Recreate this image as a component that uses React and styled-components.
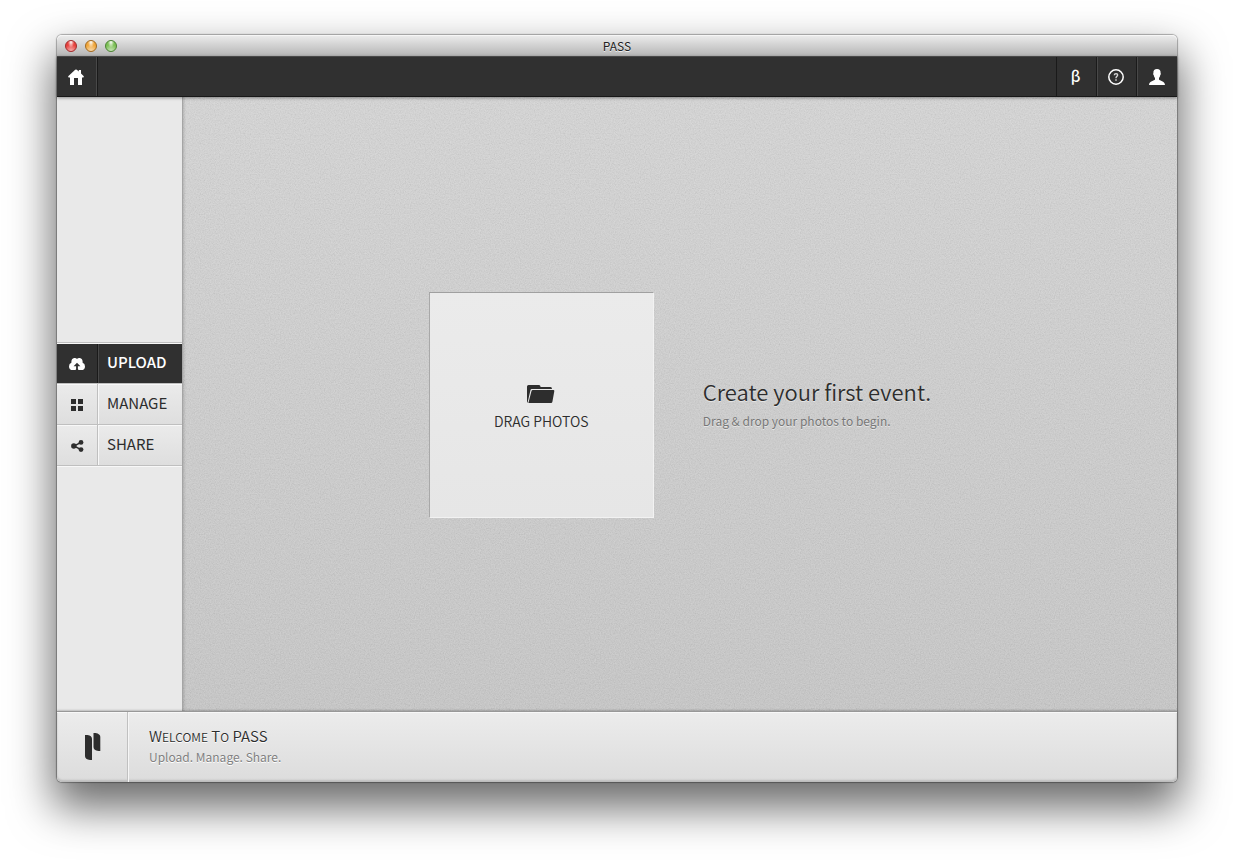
import React from 'react'
import styled, { createGlobalStyle, css } from 'styled-components'

const HomeIcon = () => (
  <svg width="16" height="16" viewBox="0 0 16 16" fill="currentColor" aria-hidden="true">
    <path d="M7.2 .8 Q8 0 8.8 .8 L10.8 2.6 V1 H13 V4.6 L15.8 7.3 Q16 8.6 15 8.6 H14 V16 H10 V9 H6 V16 H2 V8.6 H1 Q0 8.6 .2 7.3 Z" />
  </svg>
)

const HelpIcon = () => (
  <svg width="16" height="16" viewBox="0 0 16 16" fill="none" stroke="currentColor" aria-hidden="true">
    <circle cx="8" cy="8" r="7.2" strokeWidth="1.5" />
    <path d="M6.3 6.2 Q6.4 4.6 8 4.6 Q9.7 4.7 9.6 6.2 Q9.5 7.1 8.6 7.6 Q8 8 8 9.3" strokeWidth="1.4" opacity=".8" />
    <path d="M8 10.3 V11.8" strokeWidth="1.5" opacity=".8" />
  </svg>
)

const UserIcon = () => (
  <svg width="16" height="16" viewBox="0 0 16 16" fill="currentColor" aria-hidden="true">
    <path d="M8 0 C10.5 0 11.8 1.5 11.6 4 C12 4.6 11.8 5.8 11.2 6.2 C11 7.6 10.4 8.4 10 9 V10.6 C10.6 11.9 15.6 12 16 16 H0 C.4 12 5.4 11.9 6 10.6 V9 C5.6 8.4 5 7.6 4.8 6.2 C4.2 5.8 4 4.6 4.4 4 C4.2 1.5 5.5 0 8 0 Z" />
  </svg>
)

const CloudIcon = () => (
  <svg width="16" height="12" viewBox="0 0 16 12" fill="currentColor" aria-hidden="true">
    <path
      fillRule="evenodd"
      d="M4 12 Q0 12 0 8.4 Q0 5.4 2.4 4.8 Q2 1 5.2 .1 Q7 -.2 8 1 Q9 -.2 10.8 .1 Q14 1 13.6 4.8 Q16 5.4 16 8.4 Q16 12 12 12 H10 Q8.9 12 8.9 11 V8.3 H11.4 L8 4.7 L4.6 8.3 H7.1 V11 Q7.1 12 6 12 Z"
    />
  </svg>
)

const GridIcon = () => (
  <svg width="12" height="12" viewBox="0 0 12 12" fill="currentColor" aria-hidden="true">
    <path d="M0 0h5v5H0zM7 0h5v5H7zM0 7h5v5H0zM7 7h5v5H7z" />
  </svg>
)

const ShareIcon = () => (
  <svg width="13" height="12" viewBox="0 0 13 12" aria-hidden="true">
    <path d="M10 2.3 L3 6 L10 9.7" fill="none" stroke="currentColor" strokeWidth="1.5" />
    <g fill="currentColor">
      <circle cx="10" cy="2.4" r="2.4" />
      <circle cx="2.8" cy="6" r="2.7" />
      <circle cx="10" cy="9.6" r="2.4" />
    </g>
  </svg>
)

const FolderIcon = () => (
  <svg width="28" height="18" viewBox="0 0 28 18" fill="currentColor" aria-hidden="true">
    <path d="M0 17.5 V1.5 Q0 0 1.5 0 H12 Q13.4 0 13.6 2 H23.5 Q25 2 25 4 H4.6 Q3.8 4 3.5 5 L.6 17.5 Z" />
    <path d="M1.4 18 L4.5 6 Q4.8 5 5.8 5 H26.4 Q27.5 5 27.3 6.2 L25.4 16.8 Q25.2 18 24 18 Z" />
  </svg>
)

const Logo = () => (
  <svg width="16" height="27" viewBox="0 0 16 27" fill="currentColor" aria-hidden="true">
    <path d="M0 2 H2.5 Q7 2.5 7 6 V27 H5 Q0 26.5 0 23 Z" />
    <path d="M8.5 0 H10.5 Q15.3 .8 15.3 4 V18 H13.5 Q8.5 17.4 8.5 14 Z" />
  </svg>
)

const Grain = () => (
  <Texture aria-hidden="true">
    <filter id="grain">
      <feTurbulence type="fractalNoise" baseFrequency="0.8" numOctaves="2" seed="4" />
      <feColorMatrix type="saturate" values="0" />
      <feComponentTransfer>
        <feFuncA type="linear" slope="0" intercept="1" />
      </feComponentTransfer>
    </filter>
    <rect width="100%" height="100%" filter="url(#grain)" opacity="0.2" />
  </Texture>
)

const tabs = [
  { name: 'Upload', icon: <CloudIcon />, active: true },
  { name: 'Manage', icon: <GridIcon /> },
  { name: 'Share', icon: <ShareIcon /> },
]

const App = () => (
  <Desktop>
    <GlobalStyle />
    <Window>
      <TitleBar>
        <Lights>
          <Light $rim="#a03030" $color="#e8413d" aria-label="Close" />
          <Light $rim="#a16a24" $color="#f0a63a" aria-label="Minimize" />
          <Light $rim="#4e8237" $color="#7cc055" aria-label="Zoom" />
        </Lights>
        <WindowName>PASS</WindowName>
      </TitleBar>

      <Toolbar>
        <ToolButton aria-label="Home">
          <HomeIcon />
        </ToolButton>
        <Spacer />
        <ToolButton>
          <Beta>β</Beta>
        </ToolButton>
        <ToolButton aria-label="Help">
          <HelpIcon />
        </ToolButton>
        <ToolButton aria-label="Account">
          <UserIcon />
        </ToolButton>
      </Toolbar>

      <Body>
        <Sidebar>
          {tabs.map(tab => (
            <Tab key={tab.name} $active={tab.active}>
              <TabIcon $active={tab.active}>{tab.icon}</TabIcon>
              <TabName $active={tab.active}>{tab.name.toUpperCase()}</TabName>
            </Tab>
          ))}
        </Sidebar>
        <Main>
          <Grain />
          <DropZone>
            <FolderIcon />
            DRAG PHOTOS
          </DropZone>
          <Intro>
            <Title>Create your first event.</Title>
            <Hint>Drag &amp; drop your photos to begin.</Hint>
          </Intro>
        </Main>
      </Body>

      <Footer>
        <Brand>
          <Logo />
        </Brand>
        <Welcome>
          <WelcomeTitle>
            W<SmallCaps>elcome</SmallCaps> T<SmallCaps>o</SmallCaps> PASS
          </WelcomeTitle>
          <WelcomeText>Upload. Manage. Share.</WelcomeText>
        </Welcome>
      </Footer>
    </Window>
  </Desktop>
)

export default App

const GlobalStyle = createGlobalStyle`
  * {
    box-sizing: border-box;
  }
  body {
    margin: 0;
    background: #fff;
    color: #2d2d2d;
    font-family: 'Noto Sans CJK SC', 'Noto Sans', sans-serif;
  }
  button {
    padding: 0;
    border: 0;
    color: inherit;
    font: inherit;
    cursor: pointer;
  }
`
const Desktop = styled.div`
  display: flex;
  min-height: 100vh;
  padding: 35px 57px 79px;
  overflow: hidden;
`
const Window = styled.div`
  display: flex;
  flex: 1;
  flex-direction: column;
  border-radius: 5px;
  box-shadow: 0 0 1px 1px rgba(0, 0, 0, 0.3), 0 22px 44px 4px rgba(0, 0, 0, 0.58);
`
const TitleBar = styled.header`
  display: grid;
  grid-template-columns: 1fr auto 1fr;
  align-items: center;
  height: 21px;
  padding: 0 8px;
  border-radius: 5px 5px 0 0;
  background: linear-gradient(#ededed, #b5b5b5);
  box-shadow: inset 0 1px 0 #f6f6f6;
`
const Lights = styled.div`
  display: flex;
  gap: 8px;
`
const Light = styled.button`
  width: 12px;
  height: 12px;
  border: 1px solid ${props => props.$rim};
  border-radius: 50%;
  background: radial-gradient(ellipse at 50% 10%, #fff 0, transparent 45%),
    radial-gradient(circle at 50% 100%, #fff9 0, transparent 60%), ${props => props.$color};
`
const WindowName = styled.span`
  color: #222;
  font-size: 12px;
  line-height: 20px;
  text-shadow: 0 1px 0 #eee;
`
const Toolbar = styled.nav`
  position: relative;
  z-index: 1;
  display: flex;
  height: 41px;
  border-top: 1px solid #484848;
  border-bottom: 1px solid #181818;
  background: #303030;
  box-shadow: 0 1px 3px rgba(0, 0, 0, 0.4);
  color: #fff;
`
const Spacer = styled.div`
  flex: 1;
  border-right: 1px solid #1a1a1a;
  box-shadow: inset 1px 0 0 #1a1a1a, -1px 0 0 #484848;
`
const ToolButton = styled.button`
  display: flex;
  align-items: center;
  justify-content: center;
  width: 40px;
  padding-right: 3px;
  background: none;

  & + & {
    box-shadow: -1px 0 0 #1a1a1a, inset 1px 0 0 #484848;
  }
  &:last-child {
    padding-right: 0;
  }
`
const Beta = styled.span`
  padding-bottom: 2px;
  font-size: 15px;
  font-weight: 500;
  line-height: 20px;
`
const Body = styled.div`
  display: flex;
  flex: 1;
`
const Sidebar = styled.nav`
  display: flex;
  flex-direction: column;
  justify-content: center;
  width: 126px;
  border-right: 1px solid #a5a5a5;
  background: #e9e9e9;
`
const Tab = styled.button`
  display: flex;
  height: 41px;
  border-bottom: 1px solid #bfbfbf;
  background: linear-gradient(#ebebeb, #dedede);
  box-shadow: inset 0 1px 0 #f8f8f8;

  &:last-child {
    box-shadow: inset 0 1px 0 #f8f8f8, 0 1px 0 #f8f8f8;
  }
  ${props =>
    props.$active &&
    css`
      border-top: 1px solid #f8f8f8;
      background: #303030;
      box-shadow: 0 -1px 0 #bfbfbf;
      color: #fff;
    `}
`
const TabIcon = styled.span`
  display: flex;
  align-items: center;
  justify-content: center;
  align-self: stretch;
  width: 41px;
  padding-top: 2px;
  border-right: 1px solid ${props => (props.$active ? '#1a1a1a' : '#bfbfbf')};
  box-shadow: 1px 0 0 ${props => (props.$active ? '#484848' : '#f8f8f8')};
`
const TabName = styled.span`
  padding-left: 9px;
  font-size: 15px;
  font-weight: ${props => (props.$active ? 500 : 400)};
  line-height: ${props => (props.$active ? 36 : 38)}px;
`
const Main = styled.main`
  position: relative;
  display: flex;
  flex: 1;
  align-items: center;
  justify-content: center;
  gap: 49px;
  padding-top: 2px;
  background: linear-gradient(#d9d9d9, #c9c9c9);
  box-shadow: inset 3px 0 3px -2px rgba(0, 0, 0, 0.2);
`
const Texture = styled.svg`
  position: absolute;
  inset: 0;
  width: 100%;
  height: 100%;
  pointer-events: none;
`
const DropZone = styled.button`
  position: relative;
  display: flex;
  flex-direction: column;
  align-items: center;
  justify-content: center;
  gap: 8px;
  width: 225px;
  height: 226px;
  padding-top: 6px;
  border: 1px solid #f2f2f2;
  border-top-color: #a0a0a0;
  border-left-color: #a8a8a8;
  background: linear-gradient(#ebebeb, #e6e6e6);
  font-size: 14px;
  font-weight: 350;
  line-height: 20px;
`
const Intro = styled.section`
  position: relative;
  padding-bottom: 4px;
  text-shadow: 0 1px 0 #e6e6e6;
`
const Title = styled.h1`
  margin: 0;
  font-size: 22px;
  font-weight: 350;
  line-height: 30px;
`
const Hint = styled.p`
  margin: 5px 0 0;
  color: #777;
  font-size: 12px;
  line-height: 20px;
`
const Footer = styled.footer`
  position: relative;
  display: flex;
  height: 71px;
  border-top: 1px solid #989898;
  border-radius: 0 0 5px 5px;
  background: linear-gradient(#ececec, #dcdcdc);
  box-shadow: inset 0 1px 0 #f8f8f8, inset 0 -2px 2px #bbb, 0 -1px 2px rgba(0, 0, 0, 0.2);
`
const Brand = styled.div`
  display: flex;
  align-items: center;
  justify-content: center;
  width: 71px;
  padding: 0 0 2px 1px;
  border-right: 1px solid #c0c0c0;
  box-shadow: 1px 0 0 #f6f6f6;
`
const Welcome = styled.div`
  padding: 14px 21px;
  text-shadow: 0 1px 0 #fff;
`
const WelcomeTitle = styled.h2`
  margin: 0;
  font-size: 15px;
  font-weight: 350;
  line-height: 20px;
`
const SmallCaps = styled.span`
  font-size: 12px;
  text-transform: uppercase;
`
const WelcomeText = styled.p`
  margin: 0;
  color: #808080;
  font-size: 12px;
  line-height: 20px;
`
